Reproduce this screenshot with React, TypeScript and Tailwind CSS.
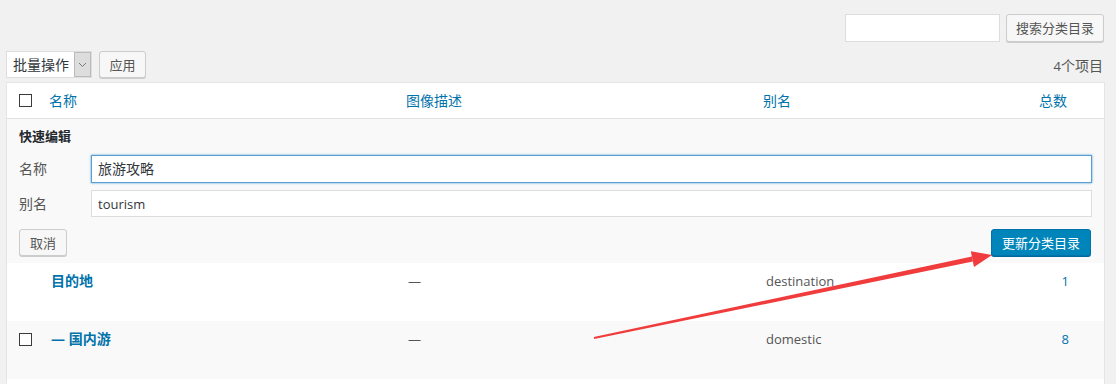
import { ReactNode } from "react";

const font = {
  fontFamily: '"Open Sans", "Noto Sans CJK SC", sans-serif',
};

function Checkbox() {
  return <span className="block h-[13px] w-[13px] border border-[#3b3b3b] bg-white" />;
}

function Cell({ children, className = "" }: { children?: ReactNode; className?: string }) {
  return <div className={`px-[8px] ${className}`}>{children}</div>;
}

const cols = "grid grid-cols-[34px_357px_357px_257px_1fr]";

export default function App() {
  const rows = [
    { name: "目的地", slug: "destination", count: "1", check: false, bg: "bg-white" },
    { name: "— 国内游", slug: "domestic", count: "8", check: true, bg: "bg-[#f9f9f9]" },
  ];

  return (
    <div
      className="relative h-[384px] w-[1116px] overflow-hidden bg-[#f1f1f1] text-[14px] leading-[20px] text-[#444]"
      style={font}
    >
      <div className="flex justify-end gap-[6px] pr-[12px] pt-[14px]">
        <div className="h-[28px] w-[155px] border border-[#ddd] bg-white" />
        <button className="h-[28px] w-[98px] rounded-[3px] border border-[#ccc] bg-[#f7f7f7] text-[13px] text-[#555] shadow-[0_1px_0_#ccc]">
          搜索分类目录
        </button>
      </div>

      <div className="mt-[9px] flex items-center pl-[6px] pr-[13px]">
        <div className="flex h-[27px] w-[86px] border border-[#ddd] bg-white">
          <span className="flex flex-1 items-center pl-[6px] text-[#32373c]">批量操作</span>
          <span className="flex w-[17px] items-center justify-center border border-[#bbb] bg-[#ddd] text-[#777]">
            <svg width="9" height="6" viewBox="0 0 9 6">
              <path d="M1 1l3.5 3.5L8 1" fill="none" stroke="#777" strokeWidth="1" />
            </svg>
          </span>
        </div>
        <button className="ml-[7px] h-[27px] w-[47px] rounded-[3px] border border-[#ccc] bg-[#f7f7f7] text-[13px] text-[#555] shadow-[0_1px_0_#ccc]">
          应用
        </button>
        <span className="ml-auto pt-[3px] text-[#555]">
          <span className="text-[13px]">4</span>个项目
        </span>
      </div>

      <div className="ml-[6px] mt-[4px] w-[1099px] border border-[#e5e5e5] bg-white">
        <div className={`${cols} h-[36px] items-center border-b border-[#e1e1e1]`}>
          <div className="pl-[12px]">
            <Checkbox />
          </div>
          <Cell className="text-[#0073aa]">名称</Cell>
          <Cell className="text-[#0073aa]">图像描述</Cell>
          <Cell className="text-[#0073aa]">别名</Cell>
          <Cell className="pr-[37px] text-right text-[#0073aa]">总数</Cell>
        </div>

        <div className="bg-[#f9f9f9] px-[12px] pb-[7px] pt-[7px]">
          <div className="text-[13px] font-bold text-[#23282d]">快速编辑</div>
          <div className="mt-[9px] flex items-center">
            <span className="w-[72px] text-[#555]">名称</span>
            <div className="flex h-[28px] w-[1001px] items-center border border-[#5b9dd9] bg-white pl-[6px] text-[#32373c] shadow-[0_0_2px_rgba(30,140,190,0.8)]">
              旅游攻略
            </div>
          </div>
          <div className="mt-[7px] flex items-center">
            <span className="w-[72px] text-[#555]">别名</span>
            <div className="flex h-[27px] w-[1001px] items-center border border-[#ddd] bg-white pl-[6px] text-[13px] text-[#32373c]">
              tourism
            </div>
          </div>
          <div className="mt-[12px] flex justify-between pr-[1px]">
            <button className="h-[27px] w-[48px] rounded-[3px] border border-[#ccc] bg-[#f7f7f7] text-[13px] text-[#555] shadow-[0_1px_0_#ccc]">
              取消
            </button>
            <button className="h-[27px] w-[100px] rounded-[3px] border border-[#0073aa] bg-[#0085ba] text-[13px] text-white shadow-[0_1px_0_#006799]">
              更新分类目录
            </button>
          </div>
        </div>

        {rows.map((row) => (
          <div key={row.slug} className={`${cols} h-[58px] items-start pt-[8px] ${row.bg}`}>
            <div className="pl-[12px] pt-[4px]">{row.check ? <Checkbox /> : null}</div>
            <Cell className="pl-[10px] font-bold text-[#0073aa]">{row.name}</Cell>
            <Cell className="pl-[10px] text-[13px] text-[#555]">—</Cell>
            <Cell className="pl-[11px] text-[13px] text-[#555]">{row.slug}</Cell>
            <Cell className="pr-[35px] text-right text-[13px] text-[#0073aa]">{row.count}</Cell>
          </div>
        ))}
        <div className="h-[20px] bg-white" />
      </div>

      <svg
        className="pointer-events-none absolute left-0 top-0"
        width="1116"
        height="384"
        viewBox="0 0 1116 384"
      >
        <polygon
          points="594.2,339 593.8,337 971.9,256.6 972.9,261.5"
          fill="#f03c3c"
        />
        <polygon points="992,255 970.8,251.3 974,266.9" fill="#f03c3c" />
      </svg>
    </div>
  );
}
